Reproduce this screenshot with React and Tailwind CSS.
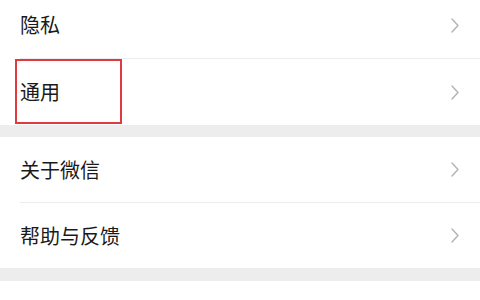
function Chevron() {
  return (
    <svg width="8" height="15" viewBox="0 0 8 15" fill="none" className="shrink-0">
      <polyline
        points="1,1 7,7.5 1,14"
        stroke="#b3b3b3"
        strokeWidth="1.4"
        strokeLinecap="round"
        strokeLinejoin="round"
      />
    </svg>
  )
}

function Row({ label, height, border, extra, children }) {
  return (
    <div className="relative pl-5 bg-white">
      <div
        className={`flex items-center justify-between pr-[21px] ${height} ${
          border ? 'border-b border-[#ececec]' : ''
        } ${extra || ''}`}
      >
        <span className="text-[20px] leading-none text-[#1a1a1a]">{label}</span>
        <Chevron />
      </div>
      {children}
    </div>
  )
}

export default function App() {
  return (
    <div
      className="w-[480px] h-[300px] overflow-hidden bg-white flex flex-col"
      style={{ fontFamily: '"Noto Sans CJK SC", "Noto Sans", sans-serif' }}
    >
      <Row label="隐私" height="h-[59px]" border extra="pb-[8px]" />
      <Row label="通用" height="h-[66px]">
        <div className="absolute left-[15px] top-0 w-[107px] h-[65px] border-2 border-[#e0393e]" />
      </Row>
      <div className="h-[12px] bg-[#ededed]" />
      <Row label="关于微信" height="h-[66px]" border />
      <Row label="帮助与反馈" height="h-[65px]" />
      <div className="h-[13px] bg-[#ededed]" />
      <div className="flex-1 bg-white" />
    </div>
  )
}
